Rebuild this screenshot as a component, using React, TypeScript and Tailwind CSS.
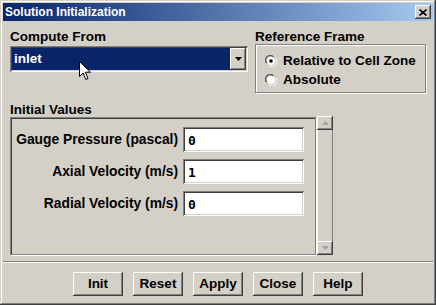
import React from "react";

const raised =
  "shadow-[inset_-1px_-1px_#404040,inset_1px_1px_#ffffff,inset_-2px_-2px_#808080,inset_2px_2px_#d4d0c8]";
const sunken =
  "shadow-[inset_1px_1px_#808080,inset_-1px_-1px_#ffffff,inset_2px_2px_#404040,inset_-2px_-2px_#d4d0c8]";

function Radio({ checked }: { checked: boolean }) {
  return (
    <svg width="12" height="12" viewBox="0 0 12 12" className="shrink-0">
      <path d="M1 8 A5 5 0 0 1 8 1" stroke="#808080" strokeWidth="1" fill="none" />
      <path d="M2 8.5 A4.2 4.2 0 0 1 8.5 2" stroke="#404040" strokeWidth="1" fill="none" />
      <circle cx="6" cy="6" r="4" fill="#ffffff" />
      <path d="M4 11 A5 5 0 0 0 11 4" stroke="#ffffff" strokeWidth="1" fill="none" />
      {checked && <circle cx="6" cy="6" r="1.8" fill="#000" />}
    </svg>
  );
}

function Btn({ label }: { label: string }) {
  return (
    <div
      className={`w-[50px] h-[24px] flex items-center justify-center bg-[#d4d0c8] ${raised} text-[13.5px] font-bold text-black`}
    >
      {label}
    </div>
  );
}

function Field({ label, value }: { label: string; value: string }) {
  return (
    <div className="flex items-center h-[25px]">
      <div className="w-[172px] text-right pr-[5px] text-[13.8px] font-bold text-black leading-none">
        {label}
      </div>
      <div
        className={`w-[121px] h-[25px] bg-white ${sunken} flex items-center pl-[5px] pt-[2px]`}
        style={{ fontFamily: '"DejaVu Sans Mono", "Liberation Mono", monospace' }}
      >
        <span className="text-[13px] font-bold text-black">{value}</span>
      </div>
    </div>
  );
}

export default function App() {
  return (
    <div
      className="w-[436px] h-[305px] bg-[#d4d0c8] relative overflow-hidden p-[3px] shadow-[inset_-1px_-1px_#404040,inset_1px_1px_#d4d0c8,inset_-2px_-2px_#808080,inset_2px_2px_#ffffff]"
      style={{ fontFamily: '"Liberation Sans", Arial, sans-serif' }}
    >
      {/* Title bar */}
      <div className="h-[18px] flex items-center justify-between bg-gradient-to-r from-[#0a246a] to-[#a6caf0] pl-[2px] pr-[2px]">
        <span className="text-white font-bold text-[12px] leading-none">Solution Initialization</span>
        <div className={`w-[16px] h-[14px] bg-[#d4d0c8] ${raised} flex items-center justify-center`}>
          <svg width="8" height="7" viewBox="0 0 8 7">
            <path d="M0.5 0.5 L7.5 6.5 M7.5 0.5 L0.5 6.5" stroke="#000" strokeWidth="1.6" />
          </svg>
        </div>
      </div>

      {/* Body */}
      <div className="pl-[7px]">
        <div className="flex mt-[8px]">
          <div className="w-[238px]">
            <div className="h-[15px] text-[13.5px] font-bold text-black leading-[15px]">Compute From</div>
            <div className={`mt-[2px] h-[26px] bg-white ${sunken} p-[2px] flex`}>
              <div className="flex-1 bg-[#0a246a] flex items-center pl-[2px]">
                <span className="text-white font-bold text-[13.5px] leading-none">inlet</span>
              </div>
              <div className={`w-[16px] bg-[#d4d0c8] ${raised} flex items-center justify-center`}>
                <svg width="7" height="4" viewBox="0 0 7 4">
                  <path d="M0 0 L7 0 L3.5 4 Z" fill="#000" />
                </svg>
              </div>
            </div>
          </div>
          <div className="ml-[7px] w-[171px]">
            <div className="h-[15px] text-[13.5px] font-bold text-black leading-[15px]">Reference Frame</div>
            <div className="h-[49px] border border-[#808080] shadow-[inset_1px_1px_#ffffff,1px_1px_#ffffff] pl-[9px] pt-[9px] flex flex-col gap-[6px]">
              <div className="flex items-center gap-[6px] h-[13px]">
                <Radio checked />
                <span className="text-[13.5px] font-bold text-black leading-none">Relative to Cell Zone</span>
              </div>
              <div className="flex items-center gap-[6px] h-[13px]">
                <Radio checked={false} />
                <span className="text-[13.5px] font-bold text-black leading-none">Absolute</span>
              </div>
            </div>
          </div>
        </div>

        <div className="mt-[9px] h-[15px] text-[13.5px] font-bold text-black leading-[15px]">Initial Values</div>
        <div className="flex mt-[0px] items-start">
          <div className="w-[306px] h-[138px] border border-[#808080] shadow-[inset_1px_1px_#404040,1px_1px_#ffffff] pt-[9px] flex flex-col gap-[7px]">
            <Field label="Gauge Pressure (pascal)" value="0" />
            <Field label="Axial Velocity (m/s)" value="1" />
            <Field label="Radial Velocity (m/s)" value="0" />
          </div>
          <div className="ml-[1px] -mt-[1px] w-[16px] h-[139px] bg-[#d4d0c8] flex flex-col justify-between shadow-[inset_1px_1px_#ffffff,inset_-1px_-1px_#808080]">
            <div className={`h-[14px] w-[16px] bg-[#d4d0c8] ${raised} flex items-center justify-center`}>
              <svg width="7" height="4" viewBox="0 0 7 4">
                <path d="M0 4 L7 4 L3.5 0 Z" fill="#a0a0a0" />
              </svg>
            </div>
            <div className={`h-[14px] w-[16px] bg-[#d4d0c8] ${raised} flex items-center justify-center`}>
              <svg width="7" height="4" viewBox="0 0 7 4">
                <path d="M0 0 L7 0 L3.5 4 Z" fill="#a0a0a0" />
              </svg>
            </div>
          </div>
        </div>
      </div>

      {/* Separator */}
      <div className="mt-[6px] h-[2px] border-t border-[#808080] border-b border-b-white" />

      {/* Buttons */}
      <div className="flex justify-center gap-[10px] mt-[9px] pr-[0px]">
        <Btn label="Init" />
        <Btn label="Reset" />
        <Btn label="Apply" />
        <Btn label="Close" />
        <Btn label="Help" />
      </div>

      {/* Cursor */}
      <svg
        className="absolute left-[79px] top-[61px]"
        width="13"
        height="20"
        viewBox="0 0 13 20"
      >
        <path
          d="M0.5 0.5 L0.5 15.5 L4.2 12 L6.8 18.5 L9 17.5 L6.4 11.2 L11.5 11.2 Z"
          fill="#ffffff"
          stroke="#000"
          strokeWidth="1"
        />
      </svg>
    </div>
  );
}
